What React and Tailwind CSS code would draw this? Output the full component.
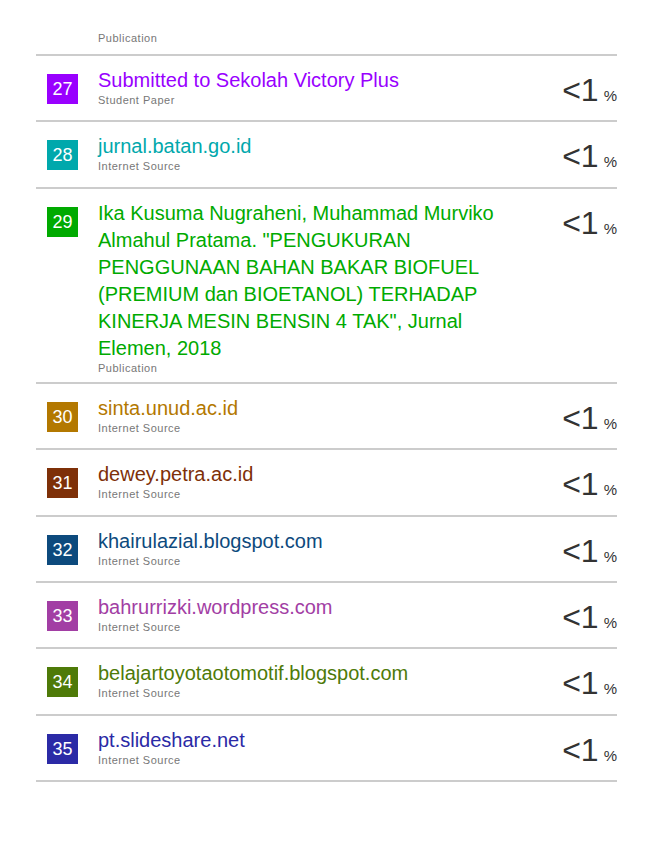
const sources = [
  { n: 27, title: "Submitted to Sekolah Victory Plus", type: "Student Paper", color: "bg-[#9900ff]", text: "text-[#9900ff]" },
  { n: 28, title: "jurnal.batan.go.id", type: "Internet Source", color: "bg-[#00a8ac]", text: "text-[#00a8ac]" },
  {
    n: 29,
    title:
      'Ika Kusuma Nugraheni, Muhammad Murviko Almahul Pratama. "PENGUKURAN PENGGUNAAN BAHAN BAKAR BIOFUEL (PREMIUM dan BIOETANOL) TERHADAP KINERJA MESIN BENSIN 4 TAK", Jurnal Elemen, 2018',
    type: "Publication",
    color: "bg-[#00aa00]",
    text: "text-[#00aa00]",
  },
  { n: 30, title: "sinta.unud.ac.id", type: "Internet Source", color: "bg-[#b37800]", text: "text-[#b37800]" },
  { n: 31, title: "dewey.petra.ac.id", type: "Internet Source", color: "bg-[#7e3008]", text: "text-[#7e3008]" },
  { n: 32, title: "khairulazial.blogspot.com", type: "Internet Source", color: "bg-[#0d4a7d]", text: "text-[#0d4a7d]" },
  { n: 33, title: "bahrurrizki.wordpress.com", type: "Internet Source", color: "bg-[#a23ea4]", text: "text-[#a23ea4]" },
  { n: 34, title: "belajartoyotaotomotif.blogspot.com", type: "Internet Source", color: "bg-[#4e7a08]", text: "text-[#4e7a08]" },
  { n: 35, title: "pt.slideshare.net", type: "Internet Source", color: "bg-[#2b2aa6]", text: "text-[#2b2aa6]" },
]

function SourceRow({ data }) {
  return (
    <div className="flex items-start min-h-[66.4px] border-b-2 border-[#cccccc]">
      <div className={`ml-[11px] mt-[18px] w-[31px] h-[30px] flex items-center justify-center text-white text-[18px] leading-none ${data.color}`}>
        {data.n}
      </div>
      <div className="ml-[20px] w-[440px] pt-[11px] pb-[7px]">
        <div className={`text-[20px] leading-[27px] ${data.text}`}>{data.title}</div>
        <div className="text-[11px] leading-[13px] tracking-[0.5px] text-[#777777]">{data.type}</div>
      </div>
      <div className="flex-1 flex justify-end items-baseline pt-[18px] text-[#333333]">
        <span className="text-[32px] leading-[32px]">&lt;1</span>
        <span className="text-[15px] ml-[5px]">%</span>
      </div>
    </div>
  )
}

export default function App() {
  return (
    <div className="bg-white min-h-[841px] w-[650px]" style={{ fontFamily: '"Liberation Sans", Arial, sans-serif' }}>
      <div className="ml-[36px] w-[581px]">
        <div className="pt-[32px] pb-[9px] border-b-2 border-[#cccccc]">
          <div className="ml-[62px] text-[11px] leading-[13px] tracking-[0.5px] text-[#777777]">Publication</div>
        </div>
        {sources.map(s => (
          <SourceRow key={s.n} data={s} />
        ))}
      </div>
    </div>
  )
}
